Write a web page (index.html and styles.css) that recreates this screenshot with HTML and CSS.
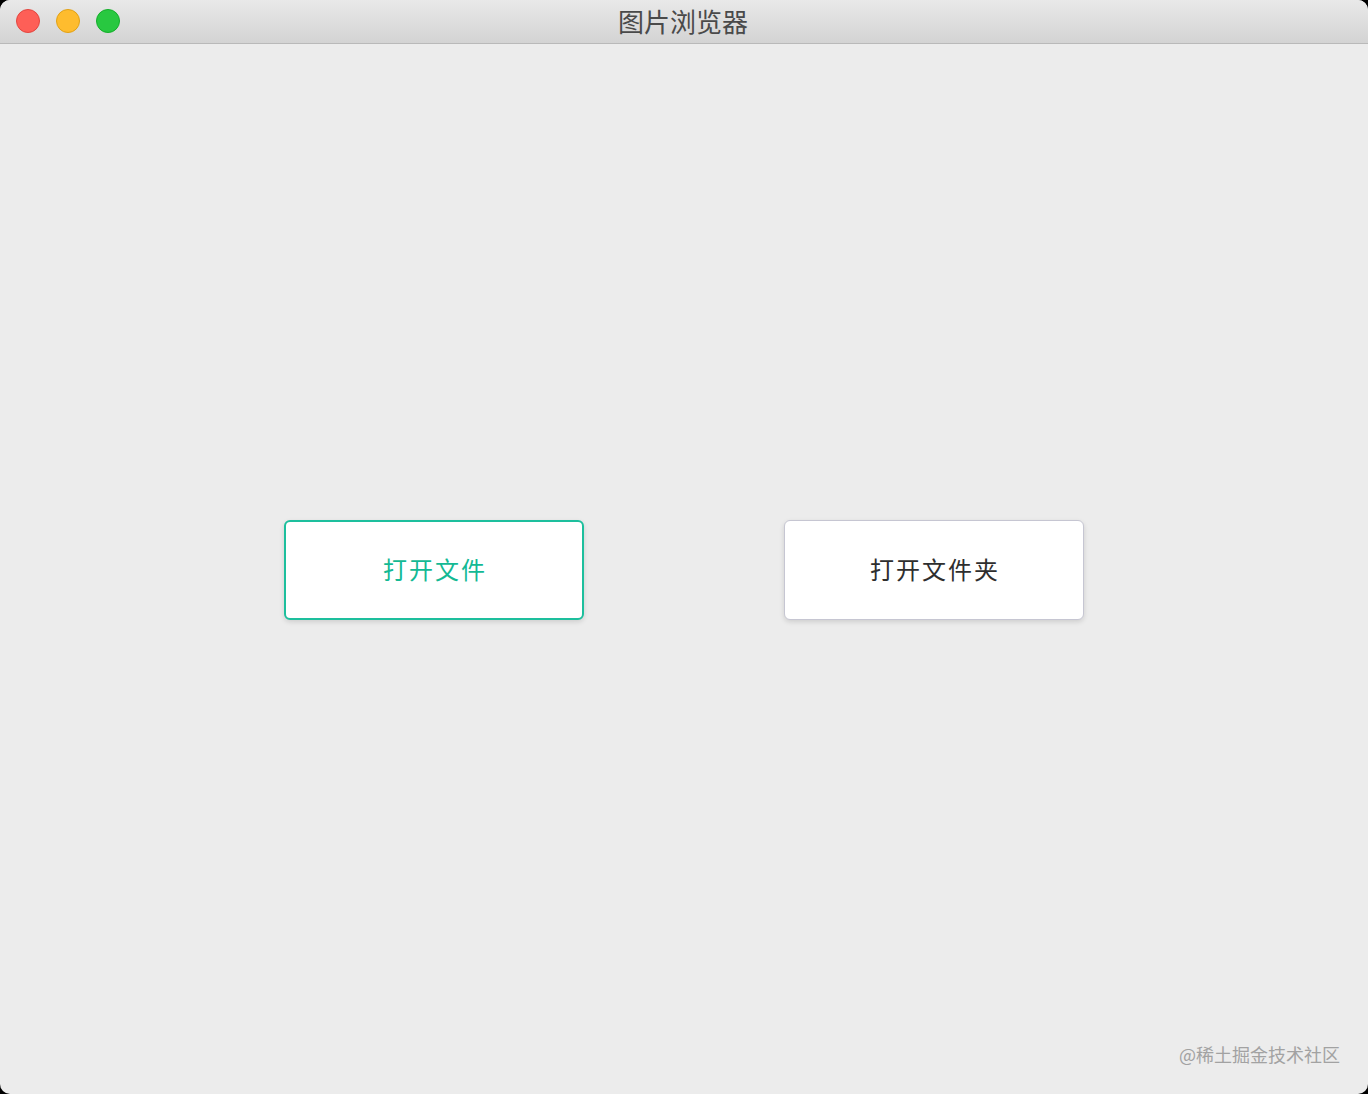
FILE: index.html
```html
<!DOCTYPE html>
<html lang="zh-CN">
<head>
    <meta charset="UTF-8">
    <meta name="viewport" content="width=device-width, initial-scale=1.0">
    <title>图片浏览器</title>
    <link rel="stylesheet" href="styles.css">
</head>
<body>
    <div class="window">
        <!-- Title bar -->
        <div class="titlebar">
            <div class="lights">
                <span class="light red"></span>
                <span class="light yellow"></span>
                <span class="light green"></span>
            </div>
            <div class="title">图片浏览器</div>
        </div>

        <div class="content">
            <button type="button" class="button primary">打开文件</button>
            <button type="button" class="button">打开文件夹</button>
            <div class="watermark">@稀土掘金技术社区</div>
        </div>
    </div>
</body>
</html>
```

FILE: styles.css
```css
body, html {
    margin: 0;
    padding: 0;
    height: 100%;
    background-color: #000;
    font-family: "Noto Sans CJK SC", "Noto Sans", sans-serif;
}
.window {
    height: 100%;
    display: flex;
    flex-direction: column;
    background-color: #ececec;
    border-radius: 10px;
    overflow: hidden;
}
.titlebar {
    position: relative;
    height: 43px;
    flex-shrink: 0;
    background: linear-gradient(#e9e9e9, #d3d3d3);
    border-bottom: 1px solid #b9b9b9;
    display: flex;
    align-items: center;
    justify-content: center;
}
.lights {
    position: absolute;
    left: 16px;
    top: 9px;
    display: flex;
    gap: 16px;
}
.light {
    width: 24px;
    height: 24px;
    border-radius: 50%;
    box-sizing: border-box;
}
.red {
    background-color: #fe5f57;
    border: 1px solid #e2463f;
}
.yellow {
    background-color: #febc2e;
    border: 1px solid #e1a116;
}
.green {
    background-color: #28c840;
    border: 1px solid #14ae2a;
}
.title {
    font-size: 26px;
    color: #4a4a4a;
    margin-left: -2px;
    margin-top: -2px;
}
.content {
    position: relative;
    flex: 1;
    display: flex;
    justify-content: center;
    align-items: center;
    gap: 200px;
    padding-top: 2px;
}
.button {
    box-sizing: border-box;
    width: 300px;
    height: 100px;
    padding: 0 0 4px;
    font-family: inherit;
    font-size: 24px;
    letter-spacing: 2px;
    text-indent: 2px;
    color: #2e2e2e;
    background-color: #fff;
    border: 1px solid #c6c6d2;
    border-radius: 6px;
    box-shadow: 0 2px 5px rgba(0, 0, 0, 0.13);
    cursor: pointer;
}
.button.primary {
    color: #13b994;
    border: 2px solid #1dbf9d;
}
.watermark {
    position: absolute;
    right: 28px;
    bottom: 27px;
    font-size: 18px;
    color: #a2a2a2;
}
```
